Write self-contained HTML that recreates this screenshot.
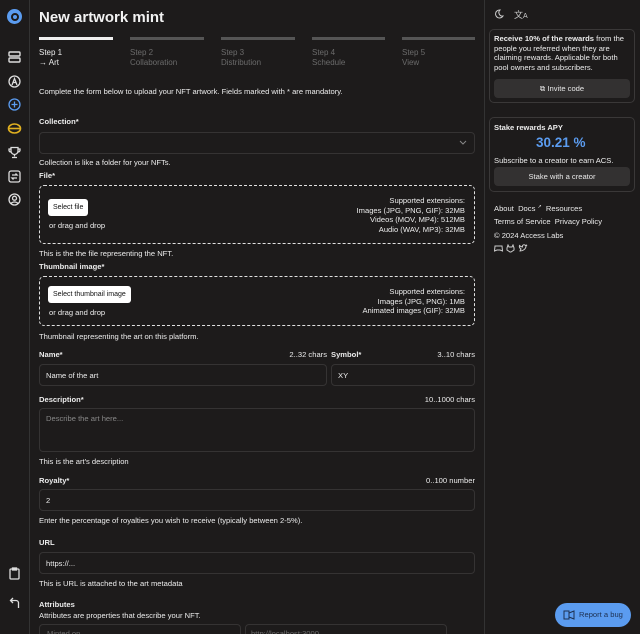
<!DOCTYPE html>
<html><head><meta charset="utf-8"><style>
*{box-sizing:border-box;margin:0;padding:0}
html,body{width:640px;height:634px;overflow:hidden}
body{background:#1d1b1b;font-family:"Liberation Sans",sans-serif;color:#ececec;font-size:7.6px;position:relative}
.a{position:absolute;white-space:nowrap}
.b{font-weight:bold}
.g{color:#6b6b6b}
.box{position:absolute;border:1px solid #353333;border-radius:4px;background:#1d1b1b}
.dz{position:absolute;border:1.3px dashed #e0e0e0;border-radius:5px}
.btnw{position:absolute;background:#fff;color:#111;border-radius:3px;font-size:7px;padding:0 5px;height:17px;line-height:17px}
.card{position:absolute;border:1px solid #3a3838;border-radius:5px}
.gb{position:absolute;background:#333131;border-radius:4px;text-align:center;color:#e8e8e8}
svg{position:absolute}
</style></head><body>
<div style="position:absolute;left:29px;top:0;width:1px;height:634px;background:#333"></div>
<div style="position:absolute;left:484px;top:0;width:1px;height:634px;background:#333"></div>
<!-- sidebar -->
<div class="a" style="left:7px;top:9px;width:15px;height:15px;border-radius:50%;background:#5b9cf0"></div>
<div class="a" style="left:10.5px;top:12.5px;width:8px;height:8px;border-radius:50%;border:2px solid #1d1b1b"></div>
<svg style="left:8px;top:51px" width="13" height="12" viewBox="0 0 13 12" fill="none" stroke="#ddd" stroke-width="1.4"><rect x="1" y="1" width="11" height="4" rx="1"/><rect x="1" y="7" width="11" height="4" rx="1"/></svg>
<svg style="left:8px;top:75px" width="13" height="13" viewBox="0 0 13 13" fill="none" stroke="#ddd" stroke-width="1.3"><circle cx="6.5" cy="6.5" r="5.5"/><path d="M4 10L6.5 3.5L9 10M5 7.5H8"/></svg>
<svg style="left:8px;top:98px" width="13" height="13" viewBox="0 0 13 13" fill="none" stroke="#5b9cf0" stroke-width="1.3"><circle cx="6.5" cy="6.5" r="5.5"/><path d="M6.5 3.5V9.5M3.5 6.5H9.5"/></svg>
<svg style="left:7px;top:122px" width="15" height="13" viewBox="0 0 15 13" fill="none" stroke="#e0b020" stroke-width="1.6"><ellipse cx="7.5" cy="6.5" rx="6" ry="4.5"/><path d="M2 6.5H13"/></svg>
<svg style="left:8px;top:146px" width="13" height="13" viewBox="0 0 13 13" fill="none" stroke="#ddd" stroke-width="1.3"><path d="M3 1.5H10V5A3.5 3.5 0 0 1 3 5Z M3 3H1V4.5A2 2 0 0 0 3 6 M10 3H12V4.5A2 2 0 0 1 10 6 M6.5 8.5V10.5 M4 11.5H9"/></svg>
<svg style="left:8px;top:170px" width="13" height="13" viewBox="0 0 13 13" fill="none" stroke="#ddd" stroke-width="1.3"><rect x="1" y="1" width="11" height="11" rx="2"/><path d="M4 5H9L7.5 3.5M9 8H4L5.5 9.5"/></svg>
<svg style="left:8px;top:193px" width="13" height="13" viewBox="0 0 13 13" fill="none" stroke="#ddd" stroke-width="1.3"><circle cx="6.5" cy="6.5" r="5.5"/><circle cx="6.5" cy="5.2" r="2"/><path d="M3 10.5C4.5 8.5 8.5 8.5 10 10.5"/></svg>
<svg style="left:9px;top:567px" width="11" height="13" viewBox="0 0 11 13" fill="none" stroke="#ddd" stroke-width="1.3"><rect x="1" y="2" width="9" height="10" rx="1"/><rect x="3.5" y="1" width="4" height="2"/></svg>
<svg style="left:9px;top:597px" width="11" height="12" viewBox="0 0 11 12" fill="none" stroke="#ddd" stroke-width="1.3"><path d="M4 1L1.5 3.5L4 6M1.5 3.5H7A2.5 2.5 0 0 1 9.5 6V11"/></svg>
<!-- main -->
<div class="a b" style="left:39px;top:9px;font-size:15px;color:#f2f2f2">New artwork mint</div>
<div class="a" style="left:39px;top:37px;width:74px;height:2.5px;background:#eee"></div>
<div class="a" style="left:130px;top:37px;width:74px;height:2.5px;background:#555"></div>
<div class="a" style="left:221px;top:37px;width:74px;height:2.5px;background:#555"></div>
<div class="a" style="left:312px;top:37px;width:73px;height:2.5px;background:#555"></div>
<div class="a" style="left:402px;top:37px;width:73px;height:2.5px;background:#555"></div>
<div class="a" style="left:39px;top:48px;line-height:10px;font-size:8px">Step 1<br>→ Art</div>
<div class="a g" style="left:130px;top:48px;line-height:10px;font-size:8px">Step 2<br>Collaboration</div>
<div class="a g" style="left:221px;top:48px;line-height:10px;font-size:8px">Step 3<br>Distribution</div>
<div class="a g" style="left:312px;top:48px;line-height:10px;font-size:8px">Step 4<br>Schedule</div>
<div class="a g" style="left:402px;top:48px;line-height:10px;font-size:8px">Step 5<br>View</div>
<div class="a" style="left:39px;top:87px">Complete the form below to upload your NFT artwork. Fields marked with * are mandatory.</div>
<div class="a b" style="left:39px;top:117px">Collection*</div>
<div class="box" style="left:39px;top:132px;width:436px;height:22px"></div>
<svg style="left:459px;top:140px" width="8" height="5" viewBox="0 0 8 5" fill="none" stroke="#888" stroke-width="1"><path d="M1 1L4 4L7 1"/></svg>
<div class="a" style="left:39px;top:158px">Collection is like a folder for your NFTs.</div>
<div class="a b" style="left:39px;top:171px">File*</div>
<div class="dz" style="left:39px;top:185px;width:436px;height:59px"></div>
<div class="btnw" style="left:48px;top:199px">Select file</div>
<div class="a" style="left:49px;top:221px">or drag and drop</div>
<div class="a" style="right:175px;top:196px;text-align:right;line-height:9.7px">Supported extensions:<br>Images (JPG, PNG, GIF): 32MB<br>Videos (MOV, MP4): 512MB<br>Audio (WAV, MP3): 32MB</div>
<div class="a" style="left:39px;top:249px">This is the the file representing the NFT.</div>
<div class="a b" style="left:39px;top:262px">Thumbnail image*</div>
<div class="dz" style="left:39px;top:276px;width:436px;height:50px"></div>
<div class="btnw" style="left:48px;top:286px">Select thumbnail image</div>
<div class="a" style="left:49px;top:308px">or drag and drop</div>
<div class="a" style="right:175px;top:287px;text-align:right;line-height:9.7px">Supported extensions:<br>Images (JPG, PNG): 1MB<br>Animated images (GIF): 32MB</div>
<div class="a" style="left:39px;top:332px">Thumbnail representing the art on this platform.</div>
<div class="a b" style="left:39px;top:350px">Name*</div>
<div class="a" style="right:313px;top:350px">2..32 chars</div>
<div class="a b" style="left:331px;top:350px">Symbol*</div>
<div class="a" style="right:165px;top:350px">3..10 chars</div>
<div class="box" style="left:39px;top:364px;width:288px;height:22px"></div>
<div class="a" style="left:46px;top:371px">Name of the art</div>
<div class="box" style="left:331px;top:364px;width:144px;height:22px"></div>
<div class="a" style="left:338px;top:371px">XY</div>
<div class="a b" style="left:39px;top:395px">Description*</div>
<div class="a" style="right:165px;top:395px">10..1000 chars</div>
<div class="box" style="left:39px;top:408px;width:436px;height:44px"></div>
<div class="a" style="left:46px;top:414px;color:#888">Describe the art here...</div>
<div class="a" style="left:39px;top:457px">This is the art's description</div>
<div class="a b" style="left:39px;top:476px">Royalty*</div>
<div class="a" style="right:165px;top:476px">0..100 number</div>
<div class="box" style="left:39px;top:489px;width:436px;height:22px"></div>
<div class="a" style="left:46px;top:496px">2</div>
<div class="a" style="left:39px;top:516px">Enter the percentage of royalties you wish to receive (typically between 2-5%).</div>
<div class="a b" style="left:39px;top:538px">URL</div>
<div class="box" style="left:39px;top:552px;width:436px;height:22px"></div>
<div class="a" style="left:46px;top:559px">https://...</div>
<div class="a" style="left:39px;top:579px">This is URL is attached to the art metadata</div>
<div class="a b" style="left:39px;top:600px">Attributes</div>
<div class="a" style="left:39px;top:611px">Attributes are properties that describe your NFT.</div>
<div class="box" style="left:39px;top:624px;width:202px;height:22px"></div>
<div class="box" style="left:245px;top:624px;width:202px;height:22px"></div>
<div class="a g" style="left:47px;top:629px">Minted on</div>
<div class="a g" style="left:251px;top:629px">http://localhost:3000</div>
<!-- right -->
<svg style="left:494px;top:9px" width="10" height="10" viewBox="0 0 10 10" fill="none" stroke="#ccc" stroke-width="1"><path d="M6 1A4 4 0 1 0 9 7A3.5 3.5 0 0 1 6 1Z"/></svg>
<div class="a" style="left:514px;top:8px;font-size:9px;color:#ccc">文<span style="font-size:7px">A</span></div>
<div class="card" style="left:489px;top:29px;width:146px;height:74px"></div>
<div class="a" style="left:494px;top:34px;line-height:9.7px;white-space:normal;width:136px"><b>Receive 10% of the rewards</b> from the people you referred when they are claiming rewards. Applicable for both pool owners and subscribers.</div>
<div class="gb" style="left:494px;top:79px;width:136px;height:19px;line-height:19px">⧉ Invite code</div>
<div class="card" style="left:489px;top:117px;width:146px;height:75px"></div>
<div class="a b" style="left:494px;top:123px">Stake rewards APY</div>
<div class="a b" style="left:536px;top:135px;font-size:13.5px;color:#5b9cf0">30.21 %</div>
<div class="a" style="left:494px;top:156px">Subscribe to a creator to earn ACS.</div>
<div class="gb" style="left:494px;top:167px;width:136px;height:19px;line-height:19px">Stake with a creator</div>
<div class="a" style="left:494px;top:204px">About&nbsp;&nbsp;Docs <span style="font-size:5px;vertical-align:top">↗</span>&nbsp; Resources</div>
<div class="a" style="left:494px;top:217px">Terms of Service&nbsp;&nbsp;Privacy Policy</div>
<div class="a" style="left:494px;top:231px">© 2024 Access Labs</div>
<svg style="left:494px;top:244px" width="36" height="9" viewBox="0 0 36 9" fill="none" stroke="#ccc" stroke-width="1"><path d="M1 2H8L8.5 7L6 6H3L0.5 7Z"/><path d="M14 1L15 3H18L19 1L20 4V6L17 8H16L13 6V4Z"/><path d="M26 7C29 7 32 5 32 2L33 1L31.5 1.5C30 0 28 1 28.5 3C27 3 26 2 25.5 1.5C25 3 26 4.5 27 5C26.5 6 26 6.5 26 7Z"/></svg>
<div class="a" style="left:555px;top:603px;width:76px;height:24px;border-radius:12px;background:#5b9cf0;color:#1d3050;line-height:24px;padding-left:24px">Report a bug</div>
<svg style="left:563px;top:610px" width="12" height="10" viewBox="0 0 12 10" fill="none" stroke="#1d3050" stroke-width="1"><path d="M1 1H6V9H1ZM6 3L11 1V9L6 7"/></svg>
</body></html>
